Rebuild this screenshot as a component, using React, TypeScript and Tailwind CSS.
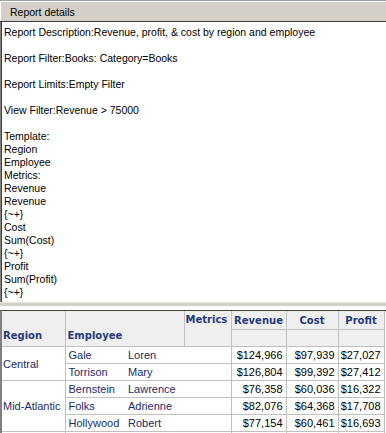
export default function App() {
  const details = [
    "Report Description:Revenue, profit, & cost by region and employee",
    "",
    "Report Filter:Books: Category=Books",
    "",
    "Report Limits:Empty Filter",
    "",
    "View Filter:Revenue > 75000",
    "",
    "Template:",
    "Region",
    "Employee",
    "Metrics:",
    "Revenue",
    "Revenue",
    "{~+}",
    "Cost",
    "Sum(Cost)",
    "{~+}",
    "Profit",
    "Sum(Profit)",
    "{~+}",
  ];

  const rows = [
    { region: "Central", span: 2, last: "Gale", first: "Loren", rev: "$124,966", cost: "$97,939", profit: "$27,027" },
    { last: "Torrison", first: "Mary", rev: "$126,804", cost: "$99,392", profit: "$27,412" },
    { region: "Mid-Atlantic", span: 3, last: "Bernstein", first: "Lawrence", rev: "$76,358", cost: "$60,036", profit: "$16,322" },
    { last: "Folks", first: "Adrienne", rev: "$82,076", cost: "$64,368", profit: "$17,708" },
    { last: "Hollywood", first: "Robert", rev: "$77,154", cost: "$60,461", profit: "$16,693" },
    { region: " ", span: 1, last: "", first: "", rev: "", cost: "", profit: "" },
  ];

  const hdr = "font-['DejaVu_Sans',sans-serif] font-bold text-[10px] text-[#253a7c]";
  const cell = "border border-[#c0c0c0] h-[17px] p-0 leading-[16px]";

  return (
    <div className="w-[386px] h-[433px] overflow-hidden bg-white font-['Liberation_Sans',Arial,sans-serif] text-[10.5px] text-black flex flex-col">
      {/* title bar */}
      <div className="shrink-0 border-t border-[#a0a0a0] border-b border-b-[#404040] bg-[#d4d0c8]">
        <div className="h-[20px] border-t border-l border-white pl-[9px] leading-[20px] text-[10.5px]">Report details</div>
      </div>

      {/* details text */}
      <div className="shrink-0 h-[280px] border-l border-[#808080]">
        <div className="h-full border-l border-[#404040] pl-[2px] pt-[4px]">
          {details.map((line, i) => (
            <div key={i} className="h-[13px] leading-[13px] whitespace-nowrap">
              {line}
            </div>
          ))}
        </div>
      </div>

      {/* splitter */}
      <div className="shrink-0 h-[4px] bg-[#d4d0c8] border-t border-[#e8e6e0]" />
      <div className="shrink-0 h-[4px] bg-white" />

      {/* grid */}
      <div className="shrink-0 border-l-2 border-[#808080] border-t border-t-[#404040]">
        <table className="table-fixed border-collapse w-[382px] text-[11px]">
          <colgroup>
            <col className="w-[63px]" />
            <col className="w-[61px]" />
            <col className="w-[58px]" />
            <col className="w-[47px]" />
            <col className="w-[55px]" />
            <col className="w-[52px]" />
            <col className="w-[46px]" />
          </colgroup>
          <thead>
            <tr className="bg-[#efefef]">
              <th rowSpan={2} className={`${cell} border-t-0 border-l-0 align-bottom text-left pl-[1px] pb-[2px] ${hdr}`}>Region</th>
              <th rowSpan={2} colSpan={2} className={`${cell} border-t-0 align-bottom text-left pl-[2px] pb-[2px] ${hdr}`}>Employee</th>
              <th rowSpan={2} className={`${cell} border-t-0 align-top text-left pl-[1px] pt-[1px] ${hdr}`}>Metrics</th>
              <th className={`${cell} border-t-0 text-center pt-[2px] ${hdr}`}>Revenue</th>
              <th className={`${cell} border-t-0 text-center pt-[2px] ${hdr}`}>Cost</th>
              <th className={`${cell} border-t-0 text-center pt-[2px] ${hdr}`}>Profit</th>
            </tr>
            <tr className="bg-[#efefef]">
              <th className={cell} />
              <th className={cell} />
              <th className={cell} />
            </tr>
          </thead>
          <tbody className="text-[#1c2a6a]">
            {rows.map((r, i) => (
              <tr key={i}>
                {r.region && (
                  <td rowSpan={r.span} className={`${cell} border-l-0 pl-[1px] align-middle`}>
                    {r.region}
                  </td>
                )}
                <td className={`${cell} border-r-0 pl-[3px]`}>{r.last}</td>
                <td colSpan={2} className={`${cell} border-l-0 pl-[2px]`}>{r.first}</td>
                <td className={`${cell} text-right pr-[3px] text-black`}>{r.rev}</td>
                <td className={`${cell} text-right pr-[3px] text-black`}>{r.cost}</td>
                <td className={`${cell} text-right pr-[3px] text-black`}>{r.profit}</td>
              </tr>
            ))}
          </tbody>
        </table>
      </div>
    </div>
  );
}
